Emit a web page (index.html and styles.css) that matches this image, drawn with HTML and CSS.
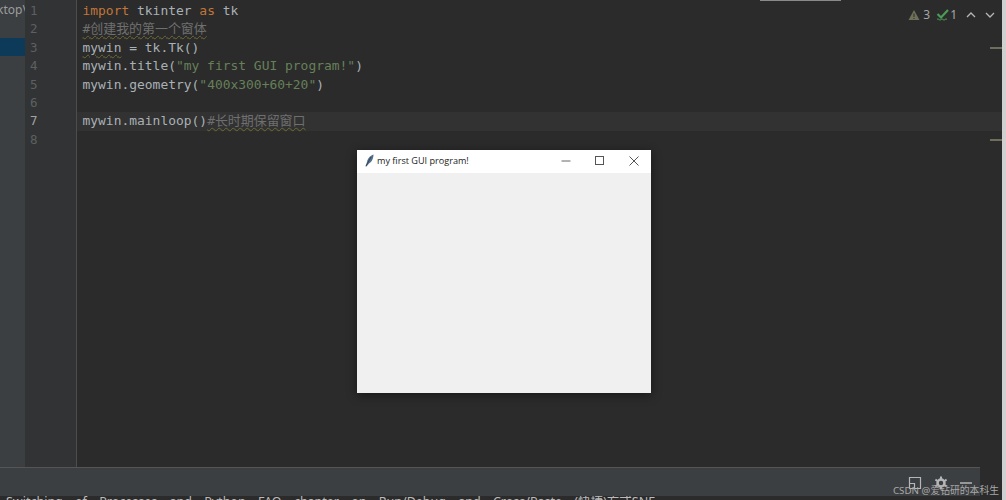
FILE: index.html
```html
<!DOCTYPE html>
<html lang="zh">
<head>
<meta charset="utf-8">
<title>my first GUI program!</title>
<link rel="stylesheet" href="styles.css">
</head>
<body>
<div class="ide">
  <div class="main">
    <aside class="tree">
      <div class="tree-row"><span class="tree-text">ktop\</span></div>
      <div class="tree-row"></div>
      <div class="tree-row selected"></div>
    </aside>
    <div class="gutter">
      <span class="num">1</span><span class="num">2</span><span class="num">3</span><span class="num">4</span><span class="num">5</span><span class="num">6</span><span class="num current">7</span><span class="num">8</span>
    </div>
    <div class="editor">
      <div class="line"><span class="kw">import</span> tkinter <span class="kw">as</span> tk</div>
      <div class="line"><span class="cm wavy">#创建我的第一个窗体</span></div>
      <div class="line"><span class="wavy">mywin</span> = tk.Tk()</div>
      <div class="line">mywin.title(<span class="str">"my first GUI program!"</span>)</div>
      <div class="line">mywin.geometry(<span class="str">"400x300+60+20"</span>)</div>
      <div class="line"></div>
      <div class="line active">mywin.mainloop()<span class="cm wavy">#长时期保留窗口</span></div>
      <div class="line"></div>
      <i class="topbar"></i>
      <div class="inspections">
        <svg class="ico" width="12" height="12" viewBox="0 0 12 12"><path d="M6 1 11.500 11H.5Z" fill="#6f7059"/><path d="M6 4.500v3.500M6 9v1" stroke="#2b2b2b" stroke-width="1"/></svg>
        <span class="count">3</span>
        <svg class="ico ok" width="14" height="12" viewBox="0 0 14 12"><path d="M1.500 5 5 8.500 12 1" fill="none" stroke="#4e9a57" stroke-width="2.200"/><path d="M1 10.500q1-1.500 2 0t2 0 2 0 2 0 2 0" fill="none" stroke="#4e9a57" stroke-width="1"/></svg>
        <span class="count">1</span>
        <svg class="chev" width="10" height="6" viewBox="0 0 10 6"><path d="M1 5l4-4 4 4" fill="none" stroke="#b4b6b7" stroke-width="1.300"/></svg>
        <svg class="chev" width="10" height="6" viewBox="0 0 10 6"><path d="M1 1l4 4 4-4" fill="none" stroke="#b4b6b7" stroke-width="1.300"/></svg>
      </div>
      <i class="mark mark-a"></i>
      <i class="mark mark-b"></i>
      <div class="tkwin">
        <div class="tk-title">
          <svg class="feather" width="11" height="13" viewBox="0 0 11 13"><path d="M1.500 12.500 3 8c.5-3 3-6.500 6.500-7.500C9.500 4 8 8 5 9.500L2.500 12.500Z" fill="#56708c"/><path d="M2 12 7 3" stroke="#2c3d50" stroke-width=".8" fill="none"/></svg>
          <span class="tk-name">my first GUI program!</span>
          <div class="tk-btns">
            <svg width="10" height="10" viewBox="0 0 10 10"><path d="M.5 5h9" stroke="#666" fill="none"/></svg>
            <svg width="10" height="10" viewBox="0 0 10 10"><rect x=".5" y=".5" width="8" height="8" stroke="#555" fill="none"/></svg>
            <svg width="10" height="10" viewBox="0 0 10 10"><path d="M.5.5l9 9M9.500.5l-9 9" stroke="#555" fill="none"/></svg>
          </div>
        </div>
      </div>
    </div>
  </div>
  <div class="toolpane">
    <div class="tool-icons">
      <svg width="14" height="14" viewBox="0 0 14 14"><path d="M1.500 1.500h11v11h-11zM1.500 7.500h5v5" fill="none" stroke="#b4b6b7" stroke-width="1.200"/></svg>
      <svg width="14" height="14" viewBox="0 0 14 14"><circle cx="7" cy="7" r="3.500" fill="none" stroke="#b4b6b7" stroke-width="2.500"/><path d="M7 .5v2.500M7 11v2.500M1.400 3.700l2.200 1.300M10.400 9l2.200 1.300M1.400 10.300l2.200-1.300M10.400 5l2.200-1.300" stroke="#b4b6b7" stroke-width="2"/></svg>
      <svg width="12" height="14" viewBox="0 0 12 14"><path d="M0 7h12" stroke="#b4b6b7" stroke-width="1.500"/></svg>
    </div>
  </div>
  <div class="status">Switching of Processes and Python FAQ chapter on Run/Debug and Cross/Paste (快捷)方式SNF</div>
  <div class="watermark">CSDN @爱钻研的本科生</div>
</div>
</body>
</html>
```
FILE: styles.css
```css
html, body { margin: 0; padding: 0; }
body { width: 1006px; height: 500px; overflow: hidden; background: #2b2b2b; }
.ide {
  position: relative;
  width: 1006px;
  height: 500px;
  box-sizing: border-box;
  border-right: 4px solid #d0d0d0;
  display: flex;
  flex-direction: column;
  overflow: hidden;
  font-family: "DejaVu Sans Mono", "Noto Sans CJK SC", monospace;
}
.main { display: flex; height: 467px; flex: none; }
.tree { width: 25px; background: #3c3f41; padding-top: 1px; flex: none; overflow: hidden; }
.tree-row { height: 18.500px; white-space: nowrap; }
.tree-text { display: block; margin-left: -3px; font: 12px/18px "Noto Sans", sans-serif; color: #9b9d9e; }
.selected { background: #0d3a58; height: 18px; }
.gutter {
  width: 52px;
  flex: none;
  box-sizing: border-box;
  background: #313335;
  border-right: 1px solid #4d4d4d;
  padding: 2px 0 0 5px;
  display: flex;
  flex-direction: column;
}
.num { height: 18.400px; font: 12.500px/18.400px "DejaVu Sans Mono", monospace; color: #5d6062; }
.num.current { color: #a4a3a3; }
.editor {
  position: relative;
  flex: 1;
  background: #2b2b2b;
  padding-top: 2px;
  font-size: 12.950px;
  line-height: 18.400px;
  color: #a9b1b6;
  box-sizing: border-box;
}
.line { height: 18.400px; padding-left: 5.500px; white-space: pre; }
.line.active { background: #323232; }
.kw { color: #c0763a; }
.str { color: #66805a; }
.cm { color: #6f6f6f; }
.wavy { text-decoration: underline wavy #6f6b36 1px; text-underline-offset: 2px; }
.topbar { position: absolute; top: 0; left: 683px; width: 81px; height: 1px; background: #8a8a8a; }
.inspections {
  position: absolute;
  top: 8px;
  right: 7px;
  display: flex;
  align-items: center;
  font: 12px/14px "Noto Sans", sans-serif;
  color: #a4a6a7;
}
.ico { margin-right: 3px; }
.ico.ok { margin: 0 0 0 6px; }
.chev { margin-left: 9px; }
.mark { position: absolute; right: 0; width: 12px; height: 2px; background: #6f6e5a; }
.mark-a { top: 47px; }
.mark-b { top: 139px; }
.tkwin {
  position: absolute;
  left: 280px;
  top: 150px;
  width: 294px;
  height: 243px;
  background: #f0f0f0;
  box-shadow: 0 2px 10px rgba(0, 0, 0, .45);
}
.tk-title {
  height: 21px;
  background: #fff;
  display: flex;
  align-items: center;
  padding: 0 12px 2px 7px;
  font: 9.100px/21px "Open Sans", "Liberation Sans", sans-serif;
  color: #222;
}
.feather { flex: none; }
.tk-name { margin-left: 2px; flex: 1; }
.tk-btns { display: flex; gap: 24px; align-items: center; }
.toolpane {
  height: 28px;
  background: #3c3f41;
  border-top: 1px solid #555;
  display: flex;
  justify-content: flex-end;
  margin-right: 22px;
  flex: none;
}
.tool-icons { display: flex; gap: 12px; padding-top: 8px; margin-right: 8px; height: 14px; }
.status {
  height: 4px;
  background: #2b2b2b;
  color: #bbb;
  font: 12.500px/11px "Noto Sans", "Noto Sans CJK SC", sans-serif;
  word-spacing: 9px;
  padding-left: 6px;
  white-space: nowrap;
  overflow: hidden;
}
.watermark {
  position: absolute;
  right: 3px;
  bottom: 3px;
  font: 9.800px/12px "Noto Sans", "Noto Sans CJK SC", sans-serif;
  color: #a8a8a8;
}
```
